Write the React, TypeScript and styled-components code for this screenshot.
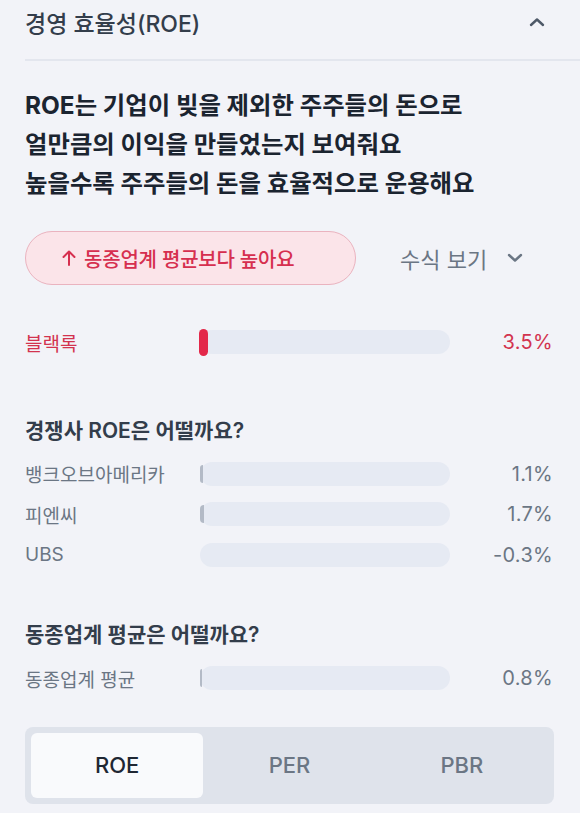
import React from "react";
import styled, { createGlobalStyle } from "styled-components";

const Global = createGlobalStyle`
  html, body { margin: 0; padding: 0; background: #f2f3f8; }
  body { font-family: "Inter", "Noto Sans CJK KR", sans-serif; -webkit-font-smoothing: antialiased; }
`;

const Page = styled.div`
  background: #f2f3f8;
  min-height: 813px;
  padding: 0 27px 0 25px;
  box-sizing: border-box;
  overflow: hidden;
`;

const Header = styled.div`
  height: 44px;
  display: flex;
  align-items: center;
  justify-content: space-between;
  padding-right: 8px;
`;

const HeaderTitle = styled.div`
  font-size: 23px;
  color: #333d4b;
  font-weight: 500;
`;

const Divider = styled.div`
  height: 2px;
  background: #e3e6ee;
  margin: 15px -27px 0 0;
`;

const Description = styled.p`
  margin: 25px 0 0;
  font-size: 24.4px;
  line-height: 39px;
  font-weight: 700;
  color: #1b2430;
`;

const ActionRow = styled.div`
  margin-top: 28px;
  display: flex;
  align-items: center;
`;

const Badge = styled.div`
  width: 331px;
  height: 54px;
  box-sizing: border-box;
  padding-left: 36px;
  border-radius: 27px;
  border: 1px solid #eab3bf;
  background: #fbe4e9;
  color: #d62f4f;
  font-size: 20px;
  font-weight: 500;
  display: flex;
  align-items: center;
  gap: 8px;
  letter-spacing: -0.2px;
`;

const FormulaToggle = styled.div`
  margin-left: 44px;
  display: flex;
  align-items: center;
  gap: 20px;
  font-size: 22px;
  color: #6b7684;
`;

const Row = styled.div<{ $highlight?: boolean }>`
  height: 40.5px;
  display: grid;
  grid-template-columns: 175px 250px 1fr;
  align-items: center;
  font-size: 19px;
  color: ${(p) => (p.$highlight ? "#d2334f" : "#6b7684")};
`;

const FirstRowWrap = styled.div`
  margin-top: 37px;
`;

const Value = styled.div`
  text-align: right;
  font-size: 20px;
  letter-spacing: 0.3px;
`;

const Track = styled.div`
  height: 24px;
  border-radius: 12px;
  background: #e6eaf3;
  display: flex;
  align-items: center;
`;

const Fill = styled.div<{ $highlight?: boolean }>`
  height: ${(p) => (p.$highlight ? "27px" : "18px")};
  border-radius: ${(p) => (p.$highlight ? "5px" : "10px 0 0 10px")};
  background: ${(p) => (p.$highlight ? "#e3284a" : "#b3bac6")};
  margin-left: ${(p) => (p.$highlight ? "-1px" : "0")};
`;

const SectionTitle = styled.div<{ $top: number }>`
  margin-top: ${(p) => p.$top}px;
  margin-bottom: 9px;
  font-size: 21px;
  line-height: 28px;
  font-weight: 600;
  color: #333d4b;
`;

const Tabs = styled.div`
  margin-top: 28px;
  height: 77px;
  box-sizing: border-box;
  padding: 6px;
  border-radius: 8px;
  background: #dfe3eb;
  display: grid;
  grid-template-columns: repeat(3, 1fr);
  width: 529px;
`;

const Tab = styled.div<{ $active?: boolean }>`
  border-radius: 6px;
  background: ${(p) => (p.$active ? "#f9fafc" : "transparent")};
  color: ${(p) => (p.$active ? "#1f2733" : "#6b7684")};
  font-size: 22px;
  font-weight: 500;
  display: flex;
  align-items: center;
  justify-content: center;
`;

const ChevronUp = () => (
  <svg width="16" height="10" viewBox="0 0 16 10" fill="none">
    <path d="M2 8L8 2.5L14 8" stroke="#4e5968" strokeWidth="2.4" strokeLinecap="round" strokeLinejoin="round" />
  </svg>
);

const ChevronDown = () => (
  <svg width="16" height="10" viewBox="0 0 16 10" fill="none">
    <path d="M2 2L8 7.5L14 2" stroke="#6b7684" strokeWidth="2.4" strokeLinecap="round" strokeLinejoin="round" />
  </svg>
);

const ArrowUp = () => (
  <svg width="14" height="18" viewBox="0 0 14 18" fill="none">
    <path d="M7 16V2.5M1.5 8L7 2.5L12.5 8" stroke="#d62f4f" strokeWidth="2" strokeLinecap="round" strokeLinejoin="round" />
  </svg>
);

type Item = { name: string; value: number; highlight?: boolean };

const BarRow = ({ name, value, highlight }: Item) => {
  const w = value > 0 ? (highlight ? 9 : Math.max(2, Math.round((value / 100) * 250))) : 0;
  return (
    <Row $highlight={highlight}>
      <div>{name}</div>
      <Track>{w > 0 && <Fill $highlight={highlight} style={{ width: w }} />}</Track>
      <Value>{value.toFixed(1)}%</Value>
    </Row>
  );
};

const competitors: Item[] = [
  { name: "뱅크오브아메리카", value: 1.1 },
  { name: "피엔씨", value: 1.7 },
  { name: "UBS", value: -0.3 },
];

export default function App() {
  return (
    <>
      <Global />
      <Page>
        <Header>
          <HeaderTitle>경영 효율성(ROE)</HeaderTitle>
          <ChevronUp />
        </Header>
        <Divider />
        <Description>
          ROE는 기업이 빚을 제외한 주주들의 돈으로
          <br />
          얼만큼의 이익을 만들었는지 보여줘요
          <br />
          높을수록 주주들의 돈을 효율적으로 운용해요
        </Description>
        <ActionRow>
          <Badge>
            <ArrowUp />
            동종업계 평균보다 높아요
          </Badge>
          <FormulaToggle>
            수식 보기
            <ChevronDown />
          </FormulaToggle>
        </ActionRow>
        <FirstRowWrap>
          <BarRow name="블랙록" value={3.5} highlight />
        </FirstRowWrap>
        <SectionTitle $top={54}>경쟁사 ROE은 어떨까요?</SectionTitle>
        {competitors.map((c) => (
          <BarRow key={c.name} {...c} />
        ))}
        <SectionTitle $top={46}>동종업계 평균은 어떨까요?</SectionTitle>
        <BarRow name="동종업계 평균" value={0.8} />
        <Tabs>
          <Tab $active>ROE</Tab>
          <Tab>PER</Tab>
          <Tab>PBR</Tab>
        </Tabs>
      </Page>
    </>
  );
}
